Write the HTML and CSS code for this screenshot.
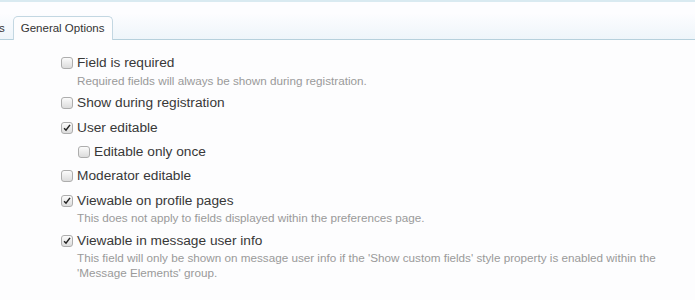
FILE: index.html
```html
<!DOCTYPE html>
<html>
<head>
    <title>Field Options</title>
    <link rel="stylesheet" href="styles.css">
</head>
<body>
    <div class="tab-bar">
        <span class="tab tab-prev">s</span>
        <span class="tab tab-active">General Options</span>
    </div>

    <ul class="options">
        <li>
            <label><input type="checkbox"> Field is required</label>
            <p class="explain">Required fields will always be shown during registration.</p>
        </li>
        <li>
            <label><input type="checkbox"> Show during registration</label>
        </li>
        <li>
            <label><input type="checkbox" checked> User editable</label>
            <ul class="sub-options">
                <li><label><input type="checkbox"> Editable only once</label></li>
            </ul>
        </li>
        <li>
            <label><input type="checkbox"> Moderator editable</label>
        </li>
        <li>
            <label><input type="checkbox" checked> Viewable on profile pages</label>
            <p class="explain">This does not apply to fields displayed within the preferences page.</p>
        </li>
        <li>
            <label><input type="checkbox" checked> Viewable in message user info</label>
            <p class="explain">This field will only be shown on message user info if the 'Show custom fields' style property is enabled within the 'Message Elements' group.</p>
        </li>
    </ul>
</body>
</html>
```

FILE: styles.css
```css
body {
    margin: 0;
    background-color: #fdfdfe;
    font-family: "Liberation Sans", Arial, sans-serif;
    color: #383838;
}
.tab-bar {
    height: 40px;
    box-sizing: border-box;
    border-top: 2px solid #d9eaf1;
    border-bottom: 1px solid #b6d0dc;
    background: linear-gradient(to bottom, #fdfdff 30%, #eef5fa);
    display: flex;
    align-items: flex-end;
}
.tab {
    font-size: 11.5px;
    line-height: 22px;
    padding: 0 7px;
    border: 1px solid #c3d7e2;
    border-bottom: none;
    border-radius: 5px 5px 0 0;
    margin-bottom: -1px;
    background-color: #fdfdfe;
    color: #333;
    white-space: nowrap;
}
.tab-prev {
    margin-left: -8px;
    padding-right: 8px;
    background: transparent;
    border-radius: 0;
    border-top: none;
    border-left: none;
    border-right: none;
    margin-bottom: 0;
    line-height: 21px;
}
.tab-active {
    height: 23px;
}
.options {
    list-style: none;
    margin: 0;
    padding: 14px 0 0 61px;
}
.options li {
    margin-bottom: 6.5px;
}
.options label {
    display: flex;
    align-items: center;
    gap: 4px;
    font-size: 13.7px;
    line-height: 18px;
    color: #383838;
}
.options input[type="checkbox"] {
    appearance: none;
    margin: 0;
    width: 12px;
    height: 12px;
    flex-shrink: 0;
    border: 1px solid #adadad;
    border-radius: 3px;
    background: linear-gradient(to bottom, #fbfbfb, #dcdcdc);
    box-sizing: border-box;
}
.options input[type="checkbox"]:checked {
    background-image: url("data:image/svg+xml;utf8,<svg xmlns='http://www.w3.org/2000/svg' viewBox='0 0 12 12'><path d='M2.5 6.2 L4.8 8.6 L9.6 2.2' fill='none' stroke='%23222' stroke-width='1.8'/></svg>"), linear-gradient(to bottom, #fbfbfb, #dcdcdc);
}
.explain {
    margin: 0.5px 0 0 16px;
    font-size: 11.7px;
    line-height: 15px;
    color: #9a9a9a;
}
.sub-options {
    list-style: none;
    margin: 6px 0 0;
    padding: 0 0 0 17px;
}
.sub-options li {
    margin-bottom: 0;
}
```
